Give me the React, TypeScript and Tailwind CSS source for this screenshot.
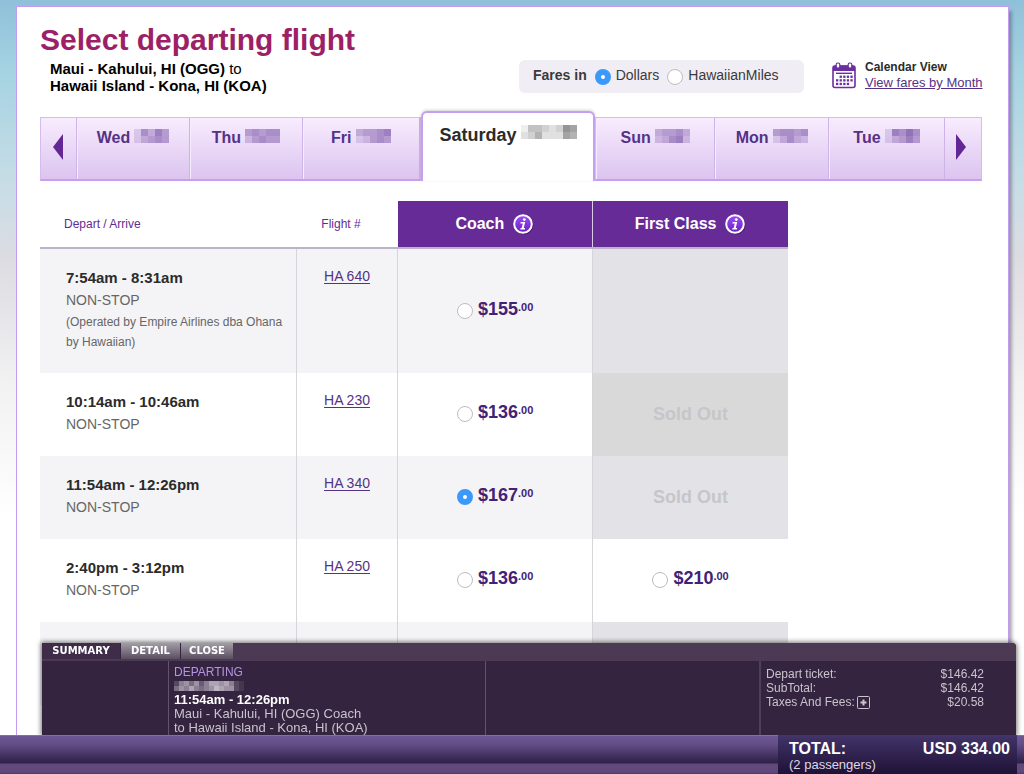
import { useState } from "react";

type Fare = { dollars: string; cents: string } | "sold" | "none";
type Flight = { time: string; note?: string; number: string; coach: Fare; first: Fare };

const flights: Flight[] = [
  {
    time: "7:54am - 8:31am",
    note: "(Operated by Empire Airlines dba Ohana by Hawaiian)",
    number: "HA 640",
    coach: { dollars: "$155", cents: ".00" },
    first: "none",
  },
  { time: "10:14am - 10:46am", number: "HA 230", coach: { dollars: "$136", cents: ".00" }, first: "sold" },
  { time: "11:54am - 12:26pm", number: "HA 340", coach: { dollars: "$167", cents: ".00" }, first: "sold" },
  {
    time: "2:40pm - 3:12pm",
    number: "HA 250",
    coach: { dollars: "$136", cents: ".00" },
    first: { dollars: "$210", cents: ".00" },
  },
];

const radioClass =
  "size-4 shrink-0 appearance-none rounded-full border border-[#bdbdbd] bg-white checked:border-[6px] checked:border-[#3b99fc]";

/* Coarse mosaic that hides the date. Each digit is the opacity of one block. */
function Mosaic({ rows, color, cell }: { rows: string[]; color: string; cell: number }) {
  const width = rows[0].length * cell;
  const height = rows.length * cell;
  return (
    <svg
      width={width}
      height={height}
      viewBox={`0 0 ${width} ${height}`}
      shapeRendering="crispEdges"
      aria-hidden="true"
      className="shrink-0"
    >
      {rows.flatMap((row, y) =>
        row.split("").map((v, x) => (
          <rect key={`${x}-${y}`} x={x * cell} y={y * cell} width={cell} height={cell} fill={color} opacity={Number(v) / 10} />
        )),
      )}
    </svg>
  );
}

function InfoIcon() {
  return (
    <svg width="22" height="22" viewBox="0 0 22 22" aria-hidden="true">
      <defs>
        <linearGradient id="info-fill" x1="0" y1="0" x2="0" y2="1">
          <stop offset="0" stopColor="#a04cf8" />
          <stop offset="1" stopColor="#6a1fc4" />
        </linearGradient>
      </defs>
      <circle cx="12" cy="12.2" r="9.4" fill="#35155c" opacity="0.7" />
      <circle cx="11" cy="11" r="8.8" fill="url(#info-fill)" stroke="#fff" strokeWidth="2" />
      <circle cx="12.3" cy="6.6" r="1.4" fill="#fff" />
      <path d="M8.700 9h4.500l-1.500 6h1.500l-.4 1.400H8.200l.4-1.400h1.100l1.100-4.600H8.400z" fill="#fff" />
    </svg>
  );
}

function CalendarIcon() {
  const dots = [
    { y: 13.6, xs: [7.6, 11.2, 14.8, 18.4] },
    { y: 17.2, xs: [4, 7.6, 11.2, 14.8, 18.4] },
    { y: 20.8, xs: [4, 7.6, 11.2, 14.8] },
  ];
  return (
    <svg width="24" height="27" viewBox="0 0 24 27" aria-hidden="true" className="shrink-0">
      <rect x="1" y="4" width="22" height="21.500" rx="2" fill="#fff" stroke="#6b2fa0" strokeWidth="1.600" />
      <path d="M1 5.500a2 2 0 0 1 2-2h18a2 2 0 0 1 2 2V9H1z" fill="#6b2fa0" />
      <rect x="4.200" y="1" width="3.600" height="5" rx="1.500" fill="#fff" stroke="#6b2fa0" strokeWidth="1.200" />
      <rect x="16.200" y="1" width="3.600" height="5" rx="1.500" fill="#fff" stroke="#6b2fa0" strokeWidth="1.200" />
      <path d="M4 11.300h16" stroke="#6b2fa0" strokeWidth="1.400" />
      {dots.flatMap((row) =>
        row.xs.map((x) => <rect key={`${x}-${row.y}`} x={x} y={row.y} width="2.300" height="2.300" fill="#6b2fa0" />),
      )}
    </svg>
  );
}

const beforeDays = [
  { name: "Wed", rows: ["26475", "24565"] },
  { name: "Thu", rows: ["56566", "35655"] },
  { name: "Fri", rows: ["45567", "23565"] },
];
const afterDays = [
  { name: "Sun", rows: ["45564", "34673"] },
  { name: "Mon", rows: ["56656", "24643"] },
  { name: "Tue", rows: ["27686", "24575"] },
];

function DayTab({ name, rows }: { name: string; rows: string[] }) {
  return (
    <button
      type="button"
      className="flex items-start justify-center gap-1 border-r border-[#cdb3e6] pt-[11px] shadow-[inset_1px_0_0_#f6ecfd]"
    >
      <span className="text-base leading-[18px] font-bold text-[#553285]">{name}</span>
      <Mosaic rows={rows} color="#7a56a6" cell={7} />
    </button>
  );
}

type FareCellProps = { fare: Fare; id: string; selected: string; onSelect: (id: string) => void; label: string };

function FareCell({ fare, id, selected, onSelect, label }: FareCellProps) {
  if (fare === "none") return null;
  if (fare === "sold") return <span className="text-lg leading-5 font-bold text-[#c6c6c9]">Sold Out</span>;
  return (
    <label className="inline-flex items-center gap-[5px] pt-0.5 text-[#432276]">
      <input
        type="radio"
        name="fare"
        aria-label={label}
        checked={selected === id}
        onChange={() => onSelect(id)}
        className={`${radioClass} mt-1`}
      />
      <span className="flex items-start font-bold">
        <span className="text-lg leading-5">{fare.dollars}</span>
        <span className="text-[11px] leading-4">{fare.cents}</span>
      </span>
    </label>
  );
}

function FlightTable() {
  const [selected, setSelected] = useState("HA 340-coach");
  return (
    <table className="w-[79.4%] table-fixed border-collapse">
      <colgroup>
        <col className="w-[34.3%]" />
        <col className="w-[13.5%]" />
        <col className="w-[26.1%]" />
        <col className="w-[26.1%]" />
      </colgroup>
      <thead>
        <tr className="h-[47px] border-b-2 border-[#bcb2cb] text-xs text-[#5f2c93]">
          <th className="pl-6 text-left font-normal">Depart / Arrive</th>
          <th className="pr-3 text-center font-normal">Flight #</th>
          <th className="bg-[#672b98] text-base font-bold text-white">
            <span className="flex items-center justify-center gap-2">
              Coach
              <button type="button" aria-label="About Coach"><InfoIcon /></button>
            </span>
          </th>
          <th className="border-l border-[#d9cce6] bg-[#672b98] text-base font-bold text-white">
            <span className="flex items-center justify-center gap-2">
              First Class
              <button type="button" aria-label="About First Class"><InfoIcon /></button>
            </span>
          </th>
        </tr>
      </thead>
      <tbody>
        {flights.map((f, i) => {
          const shaded = i % 2 === 0;
          const open = typeof f.first === "object";
          const firstBg = open ? "" : shaded ? "bg-[#e3e2e7]" : "bg-[#d9d9da]";
          return (
            <tr key={f.number} className={shaded ? "bg-[#f4f4f6]" : "bg-white"}>
              <td className="border-r border-[#d6d6da] pt-[18px] pr-2 pb-[21px] pl-[26px] align-top text-[#666]">
                <div className="text-[15px] leading-[22px] font-bold text-[#2b2b2b]">{f.time}</div>
                <div className="text-sm leading-[22px]">NON-STOP</div>
                {f.note && <div className="mt-px text-xs leading-5">{f.note}</div>}
              </td>
              <td className="border-r border-[#d6d6da] pt-[15px] text-center align-top">
                <a href="#flight" className="text-sm leading-5 text-[#553285] underline underline-offset-2">{f.number}</a>
              </td>
              <td className="border-r border-[#d6d6da] text-center">
                <FareCell fare={f.coach} id={`${f.number}-coach`} selected={selected} onSelect={setSelected} label={`${f.number} Coach`} />
              </td>
              <td className={`text-center ${firstBg}`}>
                <FareCell fare={f.first} id={`${f.number}-first`} selected={selected} onSelect={setSelected} label={`${f.number} First Class`} />
              </td>
            </tr>
          );
        })}
        <tr className="h-[83px] bg-[#f4f4f6]">
          <td className="border-r border-[#d6d6da]" />
          <td className="border-r border-[#d6d6da]" />
          <td className="border-r border-[#d6d6da]" />
          <td className="bg-[#e3e2e7]" />
        </tr>
      </tbody>
    </table>
  );
}

function SummaryBar() {
  return (
    <footer className="fixed inset-x-0 bottom-0">
      <div className="mr-2 ml-[42px] rounded-tr bg-[#35243f] text-xs leading-[14px] text-[#c9c3ce] shadow-[0_0_5px_1px_rgba(0,0,0,0.55)]">
        <div className="flex h-[18px] items-start rounded-tr bg-[#4c3a54] font-['DejaVu_Sans',sans-serif] text-[10px] leading-4 font-bold text-white">
          <button type="button" className="w-[78px] bg-[#3f2c49]">SUMMARY</button>
          <button type="button" className="w-[60px] border-l border-[#35243f] bg-linear-to-b from-[#a39da7] to-[#5b4f62]">DETAIL</button>
          <button type="button" className="w-[53px] border-l border-[#35243f] bg-linear-to-b from-[#a39da7] to-[#5b4f62]">CLOSE</button>
        </div>
        <div className="grid h-[74px] grid-cols-[126fr_317fr_274fr_257fr]">
          <div />
          <div className="border-l border-[#63546c] pt-1 pl-[5px]">
            <div className="text-[#b493e6]">DEPARTING</div>
            <div className="flex h-[14px] items-center">
              <Mosaic rows={["25646357767521", "46575456876621"]} color="#e2dce8" cell={5} />
            </div>
            <div className="text-[13px] leading-[14px]">
              <div className="font-bold text-white">11:54am - 12:26pm</div>
              <div>Maui - Kahului, HI (OGG) Coach</div>
              <div>to Hawaii Island - Kona, HI (KOA)</div>
            </div>
          </div>
          <div className="border-l border-[#63546c]" />
          <dl className="grid auto-rows-[14px] grid-cols-[auto_1fr] border-l-2 border-[#4f4059] pt-[6px] pr-8 pl-[5px]">
            <dt>Depart ticket:</dt>
            <dd className="text-right">$146.42</dd>
            <dt>SubTotal:</dt>
            <dd className="text-right">$146.42</dd>
            <dt className="flex items-center gap-0.5">
              Taxes And Fees:
              <button type="button" aria-label="Show taxes and fees">
                <svg width="13" height="13" viewBox="0 0 13 13" aria-hidden="true">
                  <rect x="0.5" y="0.5" width="12" height="12" rx="1" fill="none" stroke="#c9c3ce" />
                  <path d="M6.500 3.500v6M3.500 6.500h6" stroke="#c9c3ce" strokeWidth="2" />
                </svg>
              </button>
            </dt>
            <dd className="text-right">$20.58</dd>
          </dl>
        </div>
      </div>
      <div className="relative flex h-[39px] justify-end border-t border-[#8370a3] bg-[linear-gradient(#6d5793_0px,#644f88_8px,#30224a_26px,#30224a_27px,#62497c_28px,#62497c_36px,#4d3767_38px)] pr-[7px]">
        <div className="-mt-px w-[239px] bg-linear-to-b from-[#43346a] to-[#1f1236] px-[7px] pl-[11px] text-white">
          <div className="flex justify-between pt-[5px] text-base leading-[18px] font-bold">
            <span>TOTAL:</span>
            <span>USD 334.00</span>
          </div>
          <div className="text-[13px] leading-[14px] text-[#ddd8e6]">(2 passengers)</div>
        </div>
      </div>
    </footer>
  );
}

const stripClass = "grid h-16 border border-b-2 border-[#d5bcec] border-b-[#c69ff0] bg-linear-to-b from-[#f8ecfe] to-[#dcc4ef]";

export default function App() {
  const [currency, setCurrency] = useState("dollars");
  return (
    <div className="h-screen overflow-y-auto bg-[linear-gradient(#8fc0d9_0px,#a5d3e2_70px,#c9dde6_190px,#dcdce2_260px,#f1f1f2_380px,#fff_520px)] pt-[6px] pr-[15px] pl-4 font-['Liberation_Sans',Arial,sans-serif] [scrollbar-width:none]">
      <main className="border border-[#c29cf0] bg-white pt-[17px] pr-[26px] pb-40 pl-[23px] shadow-[3px_5px_3px_rgba(90,90,110,0.5)]">
        <header className="flex items-start">
          <div className="flex-1">
            <h1 className="text-[30px] leading-8 font-bold text-[#9c1f67]">Select departing flight</h1>
            <p className="mt-1 pl-2.5 text-[15px] leading-[17px] text-black">
              <b>Maui - Kahului, HI (OGG)</b> to
              <br />
              <b>Hawaii Island - Kona, HI (KOA)</b>
            </p>
          </div>
          <fieldset className="mt-9 flex h-[33px] w-[285px] items-center rounded-md bg-[#f1edf4] pb-1 pl-[14px] text-sm text-[#3a3a3a]">
            <span className="font-bold">Fares in</span>
            <label className="ml-2 flex items-center gap-[5px]">
              <input type="radio" name="currency" checked={currency === "dollars"} onChange={() => setCurrency("dollars")} className={`${radioClass} mt-1`} />
              Dollars
            </label>
            <label className="ml-2 flex items-center gap-[5px]">
              <input type="radio" name="currency" checked={currency === "miles"} onChange={() => setCurrency("miles")} className={`${radioClass} mt-1`} />
              HawaiianMiles
            </label>
          </fieldset>
          <div className="mt-9 ml-7 flex w-[150px] items-center gap-[9px] text-xs leading-[15px]">
            <CalendarIcon />
            <div className="whitespace-nowrap">
              <div className="font-bold text-[#2b2b2b]">Calendar View</div>
              <a href="#month" className="text-[13px] text-[#553285] underline">View fares by Month</a>
            </div>
          </div>
        </header>

        <nav aria-label="Departure date" className="mt-[17px] grid grid-cols-[381fr_174fr_387fr] items-end">
          <div className={`${stripClass} grid-cols-[36fr_114fr_113fr_118fr]`}>
            <button type="button" aria-label="Previous days" className="flex items-center justify-center border-r border-[#cdb3e6] pb-1">
              <svg width="10" height="26" viewBox="0 0 10 26" aria-hidden="true"><path d="M10 0v26L0 13z" fill="#632795" /></svg>
            </button>
            {beforeDays.map((d) => <DayTab key={d.name} {...d} />)}
          </div>
          <button type="button" aria-current="date" className="flex h-[70px] items-start justify-center gap-1 rounded-t-md border-2 border-b-0 border-[#c69ff0] bg-white pt-3 shadow-[0_-1px_3px_rgba(0,0,0,0.18)]">
            <span className="text-lg leading-5 font-bold text-[#2b2b2b]">Saturday</span>
            <Mosaic rows={["14432376", "23522265"]} color="#666666" cell={7} />
          </button>
          <div className={`${stripClass} grid-cols-[120fr_114fr_117fr_36fr]`}>
            {afterDays.map((d) => <DayTab key={d.name} {...d} />)}
            <button type="button" aria-label="Next days" className="flex items-center justify-center pr-1 pb-1">
              <svg width="10" height="26" viewBox="0 0 10 26" aria-hidden="true"><path d="M0 0v26l10-13z" fill="#632795" /></svg>
            </button>
          </div>
        </nav>

        <div className="mt-5">
          <FlightTable />
        </div>
      </main>
      <SummaryBar />
    </div>
  );
}
